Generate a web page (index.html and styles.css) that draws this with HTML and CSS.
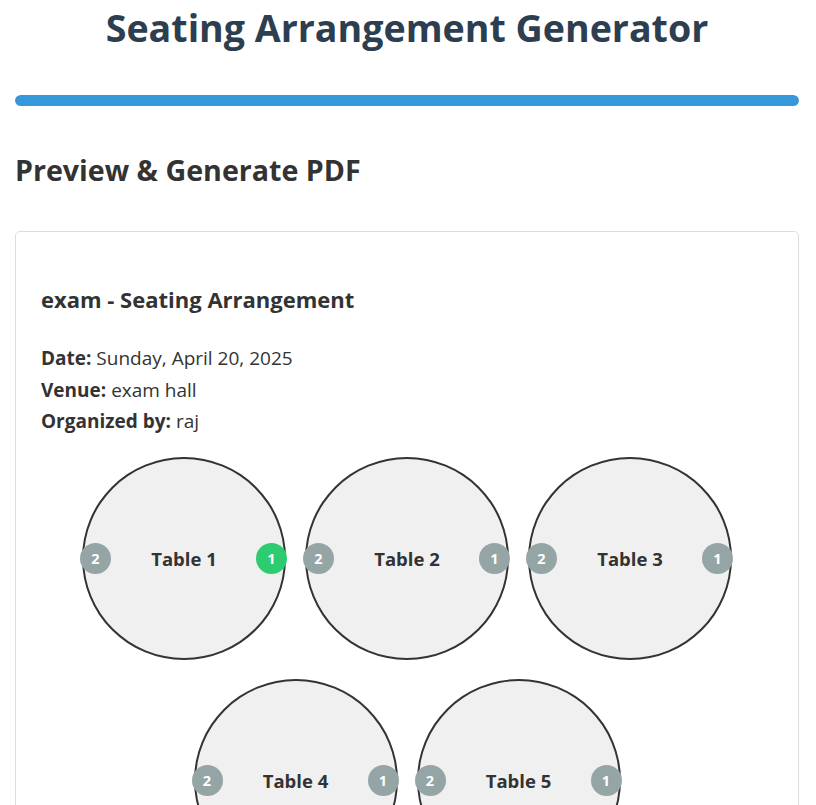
FILE: index.html
```html
<!DOCTYPE html>
<html lang="en">
<head>
<meta charset="utf-8">
<title>Seating Arrangement Generator</title>
<link rel="stylesheet" href="styles.css">
</head>
<body>
<div class="container">
  <h1 class="title">Seating Arrangement Generator</h1>
  <div class="progress"><div class="progress-fill"></div></div>
  <h2 class="section-title">Preview &amp; Generate PDF</h2>
  <div class="card">
    <h3 class="event-title">exam - Seating Arrangement</h3>
    <div class="info">
      <p><strong>Date:</strong> Sunday, April 20, 2025</p>
      <p><strong>Venue:</strong> exam hall</p>
      <p><strong>Organized by:</strong> raj</p>
    </div>
    <div class="tables">
      <div class="table"><span class="seat seat-left">2</span><span class="label">Table 1</span><span class="seat seat-right taken">1</span></div>
      <div class="table"><span class="seat seat-left">2</span><span class="label">Table 2</span><span class="seat seat-right">1</span></div>
      <div class="table"><span class="seat seat-left">2</span><span class="label">Table 3</span><span class="seat seat-right">1</span></div>
      <div class="table"><span class="seat seat-left">2</span><span class="label">Table 4</span><span class="seat seat-right">1</span></div>
      <div class="table"><span class="seat seat-left">2</span><span class="label">Table 5</span><span class="seat seat-right">1</span></div>
    </div>
  </div>
</div>
</body>
</html>
```

FILE: styles.css
```css
* { box-sizing: border-box; }
body {
  margin: 0;
  font-family: "Open Sans", "Noto Sans", sans-serif;
  color: #333;
  background: #fff;
}
.container {
  padding: 0 17px 40px 15px;
}
.title {
  margin: 4px 0 0;
  font-size: 37.6px;
  line-height: 47px;
  font-weight: 700;
  color: #2c3e50;
  text-align: center;
}
.progress {
  margin-top: 44px;
  height: 11px;
  border-radius: 6px;
  background: #e0e0e0;
  overflow: hidden;
}
.progress-fill {
  width: 100%;
  height: 100%;
  background: #3498db;
  border-radius: 6px;
}
.section-title {
  margin: 46px 0 0;
  font-size: 28.6px;
  line-height: 36px;
  font-weight: 700;
  color: #333;
}
.card {
  margin-top: 43px;
  border: 1px solid #ddd;
  border-radius: 5px;
  padding: 52px 25px 25px;
}
.event-title {
  margin: 0;
  font-size: 22px;
  line-height: 30px;
  font-weight: 700;
  color: #333;
}
.info {
  margin-top: 29px;
}
.info p {
  margin: 0;
  font-size: 19px;
  line-height: 31.5px;
}
.info strong { font-weight: 700; }
.tables {
  margin-top: 19px;
  display: flex;
  flex-wrap: wrap;
  justify-content: center;
  gap: 19px;
}
.table {
  position: relative;
  width: 204px;
  height: 203px;
  border: 2px solid #333;
  border-radius: 50%;
  background: #f0f0f0;
  display: flex;
  align-items: center;
  justify-content: center;
}
.label {
  font-size: 18.5px;
  font-weight: 700;
  color: #333;
}
.seat {
  position: absolute;
  top: 50%;
  width: 31px;
  height: 31px;
  margin-top: -15.5px;
  border-radius: 50%;
  background: #95a5a6;
  color: #fff;
  font-size: 14.5px;
  font-weight: 700;
  display: flex;
  align-items: center;
  justify-content: center;
}
.seat-left { left: -4px; }
.seat-right { right: -3px; }
.seat.taken { background: #2ecc71; }
```
